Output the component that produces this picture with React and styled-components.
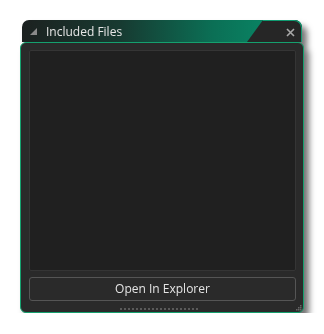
import React from "react";
import styled, { createGlobalStyle } from "styled-components";

const Global = createGlobalStyle`
  html, body { margin: 0; padding: 0; background: #ffffff; }
  body { font-family: "Open Sans", "DejaVu Sans", sans-serif; }
`;

const Page = styled.div`
  padding: 20px 0 0 20px;
`;

const Window = styled.div`
  width: 284px;
  display: flex;
  flex-direction: column;
  filter: drop-shadow(5px 6px 3px rgba(0, 0, 0, 0.55));
`;

const TitleBar = styled.div`
  height: 22px;
  margin: 0 2px 0 2px;
  border-radius: 7px 7px 0 0;
  background: linear-gradient(90deg, #1c2120 0%, #173a31 35%, #0b6f55 68%, #08916d 100%);
  display: flex;
  align-items: center;
  overflow: hidden;
`;

const Collapse = styled.svg`
  width: 7px;
  height: 7px;
  margin: 1px 0 0 8px;
  flex: none;
`;

const Title = styled.span`
  margin-left: 9px;
  font-size: 12px;
  color: #e6e6e6;
  flex: 1;
  white-space: nowrap;
`;

const CloseTab = styled.div`
  width: 55px;
  height: 100%;
  background: #262626;
  clip-path: polygon(16px 0, 100% 0, 100% 100%, 0 100%);
  display: flex;
  align-items: center;
  justify-content: flex-end;
  padding-right: 7px;
  box-sizing: border-box;
  border-top-right-radius: 7px;
  box-shadow: inset -1px 1px 0 #0f9a70;
`;

const CloseIcon = styled.svg`
  width: 9px;
  height: 9px;
  margin-top: 2px;
`;

const Frame = styled.div`
  position: relative;
  border: 1px solid #15a06e;
  border-radius: 6px;
  background: #2a2a2a;
  padding: 7px 7px 0 8px;
  display: flex;
  flex-direction: column;
  gap: 6px;
`;

const ListPanel = styled.div`
  height: 219px;
  background: #202020;
  border: 1px solid #353535;
  border-radius: 2px;
`;

const Button = styled.button`
  height: 24px;
  background: #2a2a2a;
  border: 1px solid #555555;
  border-radius: 3px;
  color: #e4e4e4;
  font-family: "Open Sans", "DejaVu Sans", sans-serif;
  font-size: 12px;
  padding: 0;
  line-height: 20px;
`;

const Footer = styled.div`
  height: 6px;
  margin-top: -1px;
  display: flex;
  justify-content: center;
  align-items: flex-end;
  padding-bottom: 2px;
  box-sizing: border-box;
`;

const Grip = styled.div`
  width: 78px;
  height: 2px;
  margin-left: -8px;
  background: repeating-linear-gradient(90deg, #5a5a5a 0 2px, transparent 2px 4px);
`;

const Resize = styled.svg`
  position: absolute;
  right: 1px;
  bottom: 1px;
  width: 7px;
  height: 7px;
`;

export default function App() {
  return (
    <>
      <Global />
      <Page>
        <Window>
          <TitleBar>
            <Collapse viewBox="0 0 7 7">
              <polygon points="7,0 7,7 0,7" fill="#8a8a8a" />
            </Collapse>
            <Title>Included Files</Title>
            <CloseTab>
              <CloseIcon viewBox="0 0 9 9">
                <path d="M1 1 L8 8 M8 1 L1 8" stroke="#a8a8a8" strokeWidth="1.6" />
              </CloseIcon>
            </CloseTab>
          </TitleBar>
          <Frame>
            <ListPanel />
            <Button>Open In Explorer</Button>
            <Footer>
              <Grip />
            </Footer>
            <Resize viewBox="0 0 7 7">
              <rect x="5" y="1" width="1.5" height="1.5" fill="#666" />
              <rect x="3" y="3" width="1.5" height="1.5" fill="#666" />
              <rect x="5" y="3" width="1.5" height="1.5" fill="#666" />
              <rect x="1" y="5" width="1.5" height="1.5" fill="#666" />
              <rect x="3" y="5" width="1.5" height="1.5" fill="#666" />
              <rect x="5" y="5" width="1.5" height="1.5" fill="#666" />
            </Resize>
          </Frame>
        </Window>
      </Page>
    </>
  );
}
